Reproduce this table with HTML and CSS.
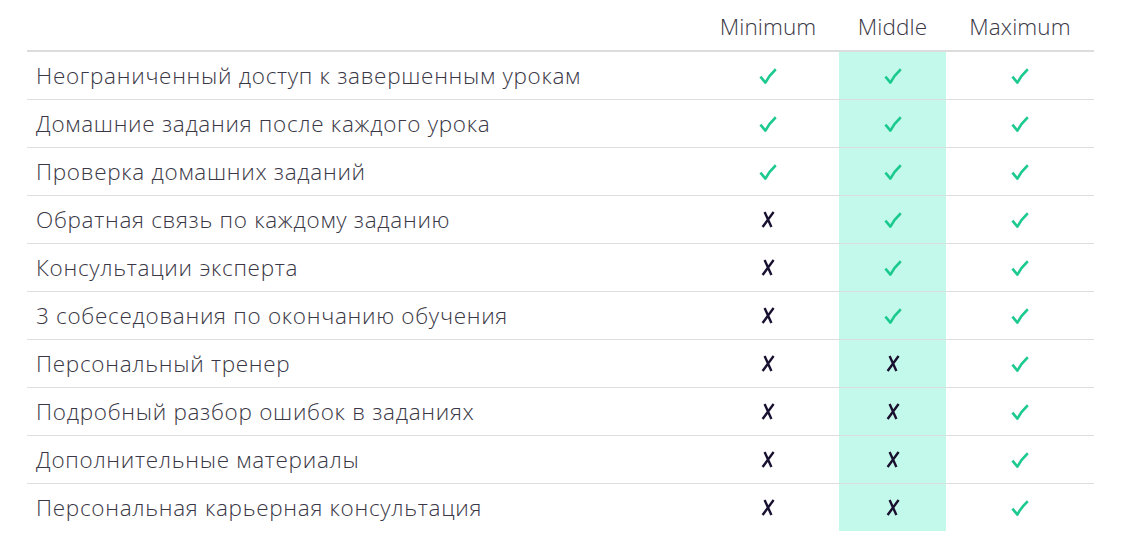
FILE: index.html
```html
<!DOCTYPE html>
<html lang="ru">
<head>
<meta charset="utf-8">
<link rel="stylesheet" href="styles.css">
</head>
<body>
<svg width="0" height="0" class="defs" aria-hidden="true">
  <defs>
    <symbol id="i-yes" viewBox="0 0 18 16">
      <path d="M1.4 8.6 L6.4 14.6 Q10 7.5 16.8 1.2" fill="none" stroke="currentColor" stroke-width="2.6" stroke-linejoin="round"/>
    </symbol>
    <symbol id="i-no" viewBox="0 0 14 17">
      <path d="M3.6 1 L10.4 16 M12.6 1 L1.6 16" fill="none" stroke="currentColor" stroke-width="2.4"/>
    </symbol>
  </defs>
</svg>
<div class="table">
  <div class="head feature"></div>
  <div class="head">Minimum</div>
  <div class="head">Middle</div>
  <div class="head">Maximum</div>

  <div class="cell feature">Неограниченный доступ к завершенным урокам</div>
  <div class="cell"><svg class="yes"><use href="#i-yes"/></svg></div>
  <div class="cell mid"><svg class="yes"><use href="#i-yes"/></svg></div>
  <div class="cell"><svg class="yes"><use href="#i-yes"/></svg></div>

  <div class="cell feature">Домашние задания после каждого урока</div>
  <div class="cell"><svg class="yes"><use href="#i-yes"/></svg></div>
  <div class="cell mid"><svg class="yes"><use href="#i-yes"/></svg></div>
  <div class="cell"><svg class="yes"><use href="#i-yes"/></svg></div>

  <div class="cell feature">Проверка домашних заданий</div>
  <div class="cell"><svg class="yes"><use href="#i-yes"/></svg></div>
  <div class="cell mid"><svg class="yes"><use href="#i-yes"/></svg></div>
  <div class="cell"><svg class="yes"><use href="#i-yes"/></svg></div>

  <div class="cell feature">Обратная связь по каждому заданию</div>
  <div class="cell"><svg class="no"><use href="#i-no"/></svg></div>
  <div class="cell mid"><svg class="yes"><use href="#i-yes"/></svg></div>
  <div class="cell"><svg class="yes"><use href="#i-yes"/></svg></div>

  <div class="cell feature">Консультации эксперта</div>
  <div class="cell"><svg class="no"><use href="#i-no"/></svg></div>
  <div class="cell mid"><svg class="yes"><use href="#i-yes"/></svg></div>
  <div class="cell"><svg class="yes"><use href="#i-yes"/></svg></div>

  <div class="cell feature">3 собеседования по окончанию обучения</div>
  <div class="cell"><svg class="no"><use href="#i-no"/></svg></div>
  <div class="cell mid"><svg class="yes"><use href="#i-yes"/></svg></div>
  <div class="cell"><svg class="yes"><use href="#i-yes"/></svg></div>

  <div class="cell feature">Персональный тренер</div>
  <div class="cell"><svg class="no"><use href="#i-no"/></svg></div>
  <div class="cell mid"><svg class="no"><use href="#i-no"/></svg></div>
  <div class="cell"><svg class="yes"><use href="#i-yes"/></svg></div>

  <div class="cell feature">Подробный разбор ошибок в заданиях</div>
  <div class="cell"><svg class="no"><use href="#i-no"/></svg></div>
  <div class="cell mid"><svg class="no"><use href="#i-no"/></svg></div>
  <div class="cell"><svg class="yes"><use href="#i-yes"/></svg></div>

  <div class="cell feature">Дополнительные материалы</div>
  <div class="cell"><svg class="no"><use href="#i-no"/></svg></div>
  <div class="cell mid"><svg class="no"><use href="#i-no"/></svg></div>
  <div class="cell"><svg class="yes"><use href="#i-yes"/></svg></div>

  <div class="cell feature last">Персональная карьерная консультация</div>
  <div class="cell last"><svg class="no"><use href="#i-no"/></svg></div>
  <div class="cell mid last"><svg class="no"><use href="#i-no"/></svg></div>
  <div class="cell last"><svg class="yes"><use href="#i-yes"/></svg></div>
</div>
</body>
</html>
```

FILE: styles.css
```css
html, body {
  margin: 0;
  padding: 0;
  background: #ffffff;
}

body {
  font-family: "Open Sans", "Noto Sans", sans-serif;
  font-weight: 300;
  color: #3a3846;
}

.defs {
  position: absolute;
  width: 0;
  height: 0;
  overflow: hidden;
}

.table {
  margin-left: 27px;
  width: 1067px;
  display: grid;
  grid-template-columns: 1fr 142px 107px 148px;
}

.head {
  height: 52px;
  box-sizing: border-box;
  border-bottom: 2px solid #dcdcdc;
  font-size: 22.5px;
  letter-spacing: 0.1px;
  display: flex;
  align-items: center;
  justify-content: center;
  padding-top: 2px;
}

.cell {
  height: 48px;
  box-sizing: border-box;
  border-bottom: 1px solid #dedede;
  display: flex;
  align-items: center;
  justify-content: center;
  font-size: 22.5px;
}

.cell.feature {
  justify-content: flex-start;
  padding-left: 9px;
  letter-spacing: 0.7px;
}

.cell.last {
  border-bottom: none;
  height: 47px;
}

.cell.mid {
  background: #c3f9ea;
}

.yes {
  width: 18px;
  height: 16px;
  color: #1cc98f;
}

.no {
  width: 14px;
  height: 17px;
  color: #1a1030;
}
```
